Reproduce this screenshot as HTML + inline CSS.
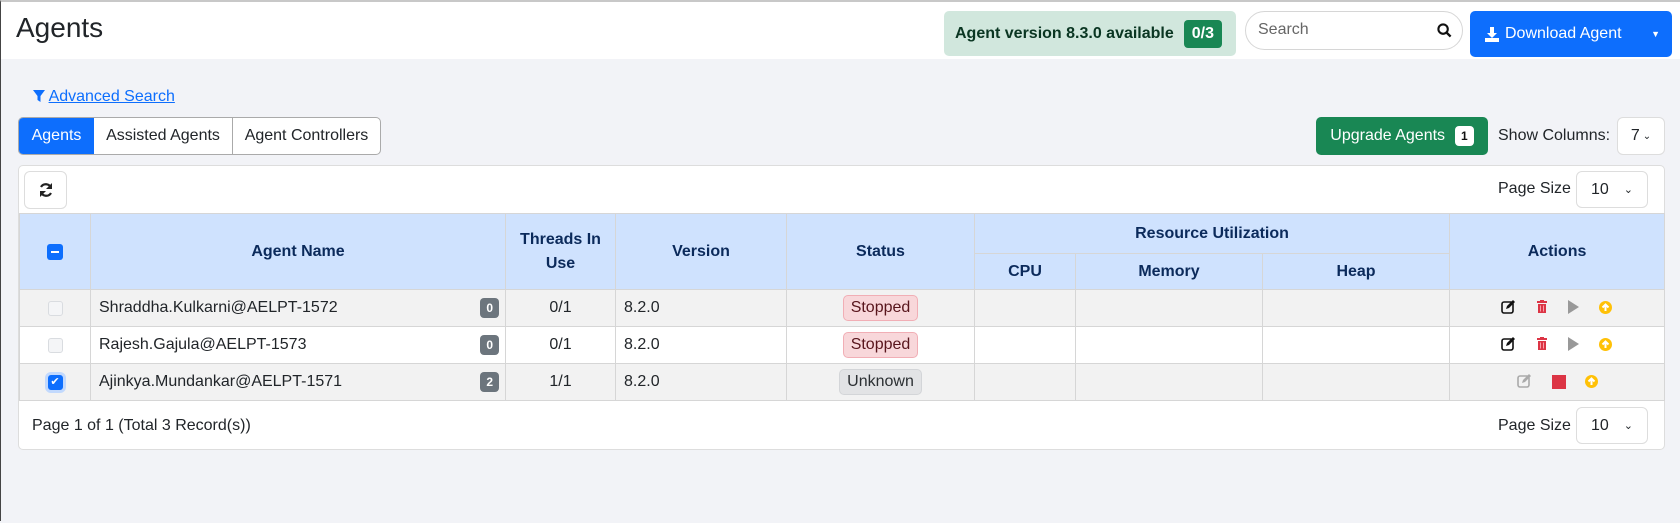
<!DOCTYPE html>
<html><head><meta charset="utf-8"><style>
*{box-sizing:border-box;margin:0;padding:0}
body{width:1680px;height:521px;background:#f2f3f7;font-family:"Liberation Sans",sans-serif;font-size:16px;color:#212529;position:relative;overflow:hidden;border-left:1px solid #444;border-top:2px solid #c8c8c8}
.a{position:absolute}
.hdr{left:0;top:0;width:1680px;height:57px;background:#fff}
.btn{position:absolute;border:1px solid #c8c8c8;background:#fff;border-radius:6px;display:flex;align-items:center;justify-content:center}
table{border-collapse:collapse;position:absolute;left:18px;top:211px;width:1645px;table-layout:fixed}
td,th{border:1px solid #d6d6d6;font-size:16px}
th{background:#cfe2fe;color:#0b2a5b;font-weight:bold;text-align:center}
tr.r td{height:37px}
tr.g td{background:#f2f2f2}
.cb{width:15px;height:15px;border:1px solid #d9dce0;border-radius:3px;background:#f4f5f7;margin:auto}
.nm{display:flex;justify-content:space-between;align-items:center}
.cnt{background:#6c757d;color:#fff;font-size:12px;font-weight:bold;border-radius:4px;padding:3px 6px}
.st{display:inline-block;border-radius:5px;padding:3px 7px;font-size:16px}
.stop{background:#f8d7da;border:1px solid #f1aeb5;color:#58151c}
.unk{background:#e2e3e5;border:1px solid #d3d5d8;color:#2b2f32}
</style></head><body>
<div class="a hdr"></div>
<div class="a" style="left:15px;top:10px;font-size:28px;color:#212529">Agents</div>
<div class="a" style="left:943px;top:9px;width:292px;height:45px;background:#d1e7dd;border-radius:5px;display:flex;align-items:center;padding-left:11px;font-weight:bold;color:#0a3622;font-size:16px">Agent version 8.3.0 available <span style="margin-left:10px;background:#198754;color:#fff;border-radius:4px;padding:5px 8px">0/3</span></div>
<div class="a" style="left:1244px;top:9px;width:218px;height:39px;background:#fff;border:1px solid #d6d6d6;border-radius:20px;padding:9px 12px;color:#666">Search
<svg class="a" style="right:10px;top:11px" width="15" height="15" viewBox="0 0 16 16"><circle cx="6.5" cy="6.5" r="5" fill="none" stroke="#111" stroke-width="2.2"/><path d="M10 10l4.5 4.5" stroke="#111" stroke-width="2.5"/></svg></div>
<div class="a" style="left:1469px;top:9px;width:202px;height:46px;background:#0d6efd;border-radius:5px;color:#fff;display:flex;align-items:center;padding-left:15px;font-size:16px">
<svg width="14" height="15" viewBox="0 0 14 15" style="margin-right:6px"><path d="M5 0h4v6h3l-5 5-5-5h3z" fill="#fff"/><rect x="0" y="11" width="14" height="4" fill="#fff"/></svg>Download Agent<span style="position:absolute;right:12px;font-size:9px">▼</span></div>

<div class="a" style="left:32px;top:86px;color:#0d6efd;font-size:16px"><svg width="12" height="12" viewBox="0 0 12 12" style="vertical-align:-1px"><path d="M0 0h12L7.5 6v6L4.5 10V6z" fill="#0d6efd"/></svg> <u>Advanced Search</u></div>
<div class="a" style="left:17px;top:115px;height:38px;display:flex;border:1px solid #aaa;border-radius:5px;overflow:hidden;background:#fff">
<div style="width:75px;background:#0d6efd;color:#fff;display:flex;align-items:center;justify-content:center">Agents</div>
<div style="width:139px;border-right:1px solid #aaa;display:flex;align-items:center;justify-content:center">Assisted Agents</div>
<div style="width:147px;display:flex;align-items:center;justify-content:center">Agent Controllers</div></div>
<div class="a" style="left:1315px;top:115px;width:172px;height:38px;background:#198754;border-radius:5px;color:#fff;display:flex;align-items:center;justify-content:center">Upgrade Agents <span style="margin-left:10px;background:#fff;color:#111;font-size:12px;font-weight:bold;border-radius:4px;padding:3px 6px">1</span></div>
<div class="a" style="left:1497px;top:125px">Show Columns:</div>
<div class="btn" style="left:1616px;top:115px;width:48px;height:38px;border-color:#ddd">7<span style="font-size:10px;margin-left:3px">⌄</span></div>

<div class="a" style="left:17px;top:163px;width:1647px;height:285px;background:#fff;border:1px solid #ddd;border-radius:5px"></div>
<div class="btn" style="left:23px;top:169px;width:43px;height:38px;border-color:#ddd">
<svg width="16" height="16" viewBox="0 0 16 16"><path d="M13 6A5.5 5.5 0 0 0 3 5" fill="none" stroke="#222" stroke-width="2.2"/><path d="M14 1v6H8z" fill="#222"/><path d="M3 10a5.5 5.5 0 0 0 10 1" fill="none" stroke="#222" stroke-width="2.2"/><path d="M2 15V9h6z" fill="#222"/></svg></div>
<div class="a" style="left:1497px;top:178px">Page Size</div>
<div class="btn" style="left:1575px;top:169px;width:72px;height:37px;border-color:#ddd;justify-content:space-between;padding:0 14px">10<span style="font-size:11px">⌄</span></div>

<table>
<colgroup><col style="width:71px"><col style="width:415px"><col style="width:110px"><col style="width:171px"><col style="width:188px"><col style="width:101px"><col style="width:187px"><col style="width:187px"><col style="width:215px"></colgroup>
<tr style="height:40px"><th rowspan="2"><div style="width:16px;height:16px;background:#0d6efd;border-radius:3px;margin:auto;position:relative"><div style="position:absolute;left:4px;top:7px;width:8px;height:2px;background:#fff"></div></div></th><th rowspan="2">Agent Name</th><th rowspan="2" style="line-height:24px">Threads In<br>Use</th><th rowspan="2">Version</th><th rowspan="2">Status</th><th colspan="3">Resource Utilization</th><th rowspan="2">Actions</th></tr>
<tr style="height:36px"><th>CPU</th><th>Memory</th><th>Heap</th></tr>
<tr class="r g"><td><div class="cb"></div></td><td style="padding:0 6px 0 8px"><div class="nm"><span>Shraddha.Kulkarni@AELPT-1572</span><span class="cnt">0</span></div></td><td style="text-align:center">0/1</td><td style="padding-left:8px">8.2.0</td><td style="text-align:center"><span class="st stop">Stopped</span></td><td></td><td></td><td></td><td></td></tr>
<tr class="r"><td><div class="cb"></div></td><td style="padding:0 6px 0 8px"><div class="nm"><span>Rajesh.Gajula@AELPT-1573</span><span class="cnt">0</span></div></td><td style="text-align:center">0/1</td><td style="padding-left:8px">8.2.0</td><td style="text-align:center"><span class="st stop">Stopped</span></td><td></td><td></td><td></td><td></td></tr>
<tr class="r g"><td><div class="cb" style="background:#0d6efd;border-color:#0d6efd;box-shadow:0 0 0 3px #c2d9fd;color:#fff;font-size:11px;text-align:center;line-height:13px">✔</div></td><td style="padding:0 6px 0 8px"><div class="nm"><span>Ajinkya.Mundankar@AELPT-1571</span><span class="cnt">2</span></div></td><td style="text-align:center">1/1</td><td style="padding-left:8px">8.2.0</td><td style="text-align:center"><span class="st unk">Unknown</span></td><td></td><td></td><td></td><td></td></tr>
</table>

<svg class="a" style="left:0;top:0" width="1680" height="521">
<defs>
<g id="ed"><rect x="0" y="2" width="11" height="11" rx="2" fill="none" stroke-width="1.6"/><path d="M4 9l1-3 6-6 2 2-6 6z" stroke="none"/></g>
<g id="tr"><rect x="0" y="1" width="10" height="2" fill="#dc3545"/><rect x="3" y="0" width="4" height="2" fill="#dc3545"/><rect x="1" y="4" width="8" height="9" fill="#dc3545"/><path d="M3.5 5.5v6M6.5 5.5v6" stroke="#f8a0aa" stroke-width="1"/></g>
<g id="up"><circle cx="6.5" cy="6.5" r="6.5" fill="#ffc107"/><path d="M6.5 10V3.5M3.5 6.5l3-3 3 3" stroke="#fff" stroke-width="2" fill="none"/></g>
</defs>
<use href="#ed" x="1501" y="298" stroke="#111" fill="#111"/><use href="#tr" x="1536" y="298"/><path d="M1567 298l11 7-11 7z" fill="#999"/><use href="#up" x="1598" y="299"/>
<use href="#ed" x="1501" y="335" stroke="#111" fill="#111"/><use href="#tr" x="1536" y="335"/><path d="M1567 335l11 7-11 7z" fill="#999"/><use href="#up" x="1598" y="336"/>
<use href="#ed" x="1517" y="372" stroke="#aaa" fill="#aaa"/><rect x="1551" y="373" width="14" height="14" fill="#dc3545"/><use href="#up" x="1584" y="373"/>
</svg>

<div class="a" style="left:31px;top:415px">Page 1 of 1 (Total 3 Record(s))</div>
<div class="a" style="left:1497px;top:415px">Page Size</div>
<div class="btn" style="left:1575px;top:405px;width:72px;height:37px;border-color:#ddd;justify-content:space-between;padding:0 14px">10<span style="font-size:11px">⌄</span></div>
</body></html>
